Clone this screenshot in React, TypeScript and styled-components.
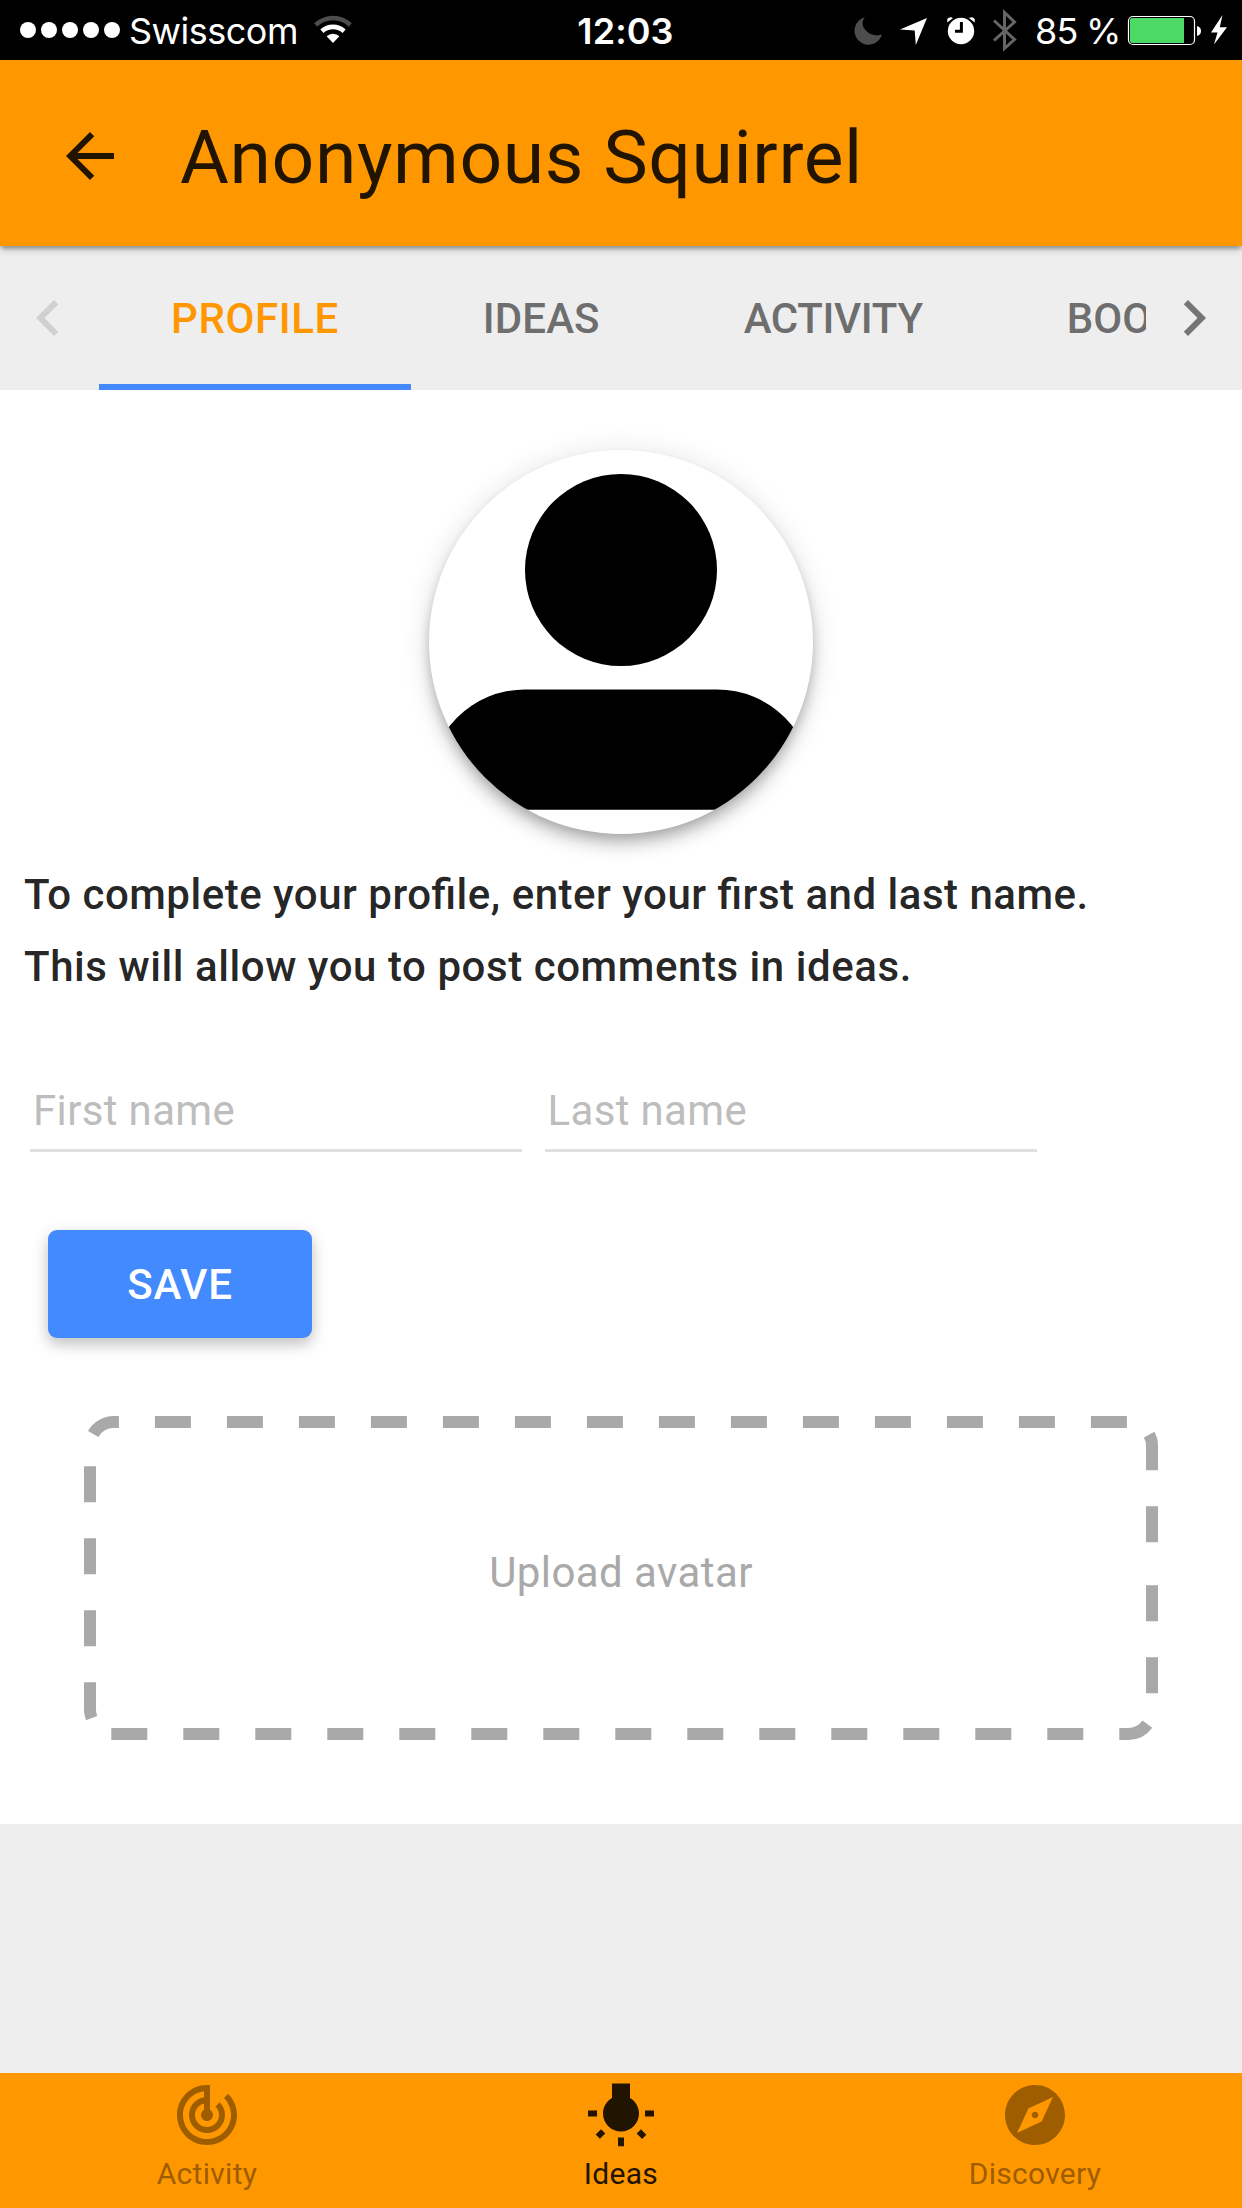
import React, { useState } from "react";
import styled, { createGlobalStyle } from "styled-components";

const GlobalStyle = createGlobalStyle`
  * { box-sizing: border-box; }
  body { margin: 0; background: #eee; }
`;

const Screen = styled.div`
  width: 1242px;
  height: 2208px;
  display: flex;
  flex-direction: column;
  overflow: hidden;
  background: #eee;
  color: rgba(0, 0, 0, 0.87);
  font-family: Roboto, "Liberation Sans", sans-serif;
`;

/* ---------- status bar ---------- */

const StatusBar = styled.div`
  flex: none;
  height: 60px;
  display: grid;
  grid-template-columns: 1fr auto 1fr;
  background: #000;
  color: #fff;
  font-family: Inter, "Liberation Sans", sans-serif;
  font-size: 36px;
  line-height: 62px;
  white-space: nowrap;
`;

const StatusLeft = styled.div`
  display: flex;
  padding-left: 20px;
`;

const StatusRight = styled.div`
  display: flex;
  justify-content: flex-end;
  padding-right: 15px;
`;

const SignalDots = styled.div`
  display: flex;
  align-items: center;
  gap: 5px;
  height: 60px;
  margin-right: 9px;
`;

const Dot = styled.i`
  width: 16px;
  height: 16px;
  border-radius: 50%;
  background: #fff;
`;

const Carrier = styled.span`
  width: 168px;
  margin-right: 17px;
  letter-spacing: -0.5px;
`;

const Clock = styled.span`
  padding-left: 9px;
  font-weight: 600;
  letter-spacing: 0.1px;
`;

const Percent = styled.span`
  width: 82px;
  margin: 0 10px 0 18px;
  letter-spacing: -0.8px;
  word-spacing: -1px;
`;

const Glyph = styled.svg`
  display: block;
  flex: none;
`;

/* ---------- header ---------- */

const Header = styled.header`
  flex: none;
  position: relative;
  z-index: 1;
  height: 186px;
  display: flex;
  align-items: center;
  padding: 6px 54px 0;
  background: #ff9800;
  box-shadow: 0 3px 9px 0 rgba(0, 0, 0, 0.2), 0 3px 3px 0 rgba(0, 0, 0, 0.14),
    0 6px 3px -3px rgba(0, 0, 0, 0.12);
`;

const Title = styled.h1`
  margin: 2px 0 0 54px;
  font-size: 75px;
  font-weight: 400;
  line-height: 90px;
  letter-spacing: 0.6px;
`;

/* ---------- tabs ---------- */

const TabBar = styled.nav`
  flex: none;
  height: 144px;
  display: flex;
`;

const PagerButton = styled.button<{ $dim?: boolean }>`
  flex: none;
  width: 96px;
  padding: 0 12px;
  border: 0;
  background: none;
  color: ${(p) => (p.$dim ? "#d0d0d0" : "#757575")};
`;

const TabCanvas = styled.div`
  flex: 1;
  display: flex;
  overflow: hidden;
  padding-left: 3px;
`;

const Tab = styled.button<{ $active?: boolean; $tracking?: number }>`
  flex: none;
  padding: 2px 72px 0;
  border: 0;
  border-top: 6px solid transparent;
  border-bottom: 6px solid ${(p) => (p.$active ? "#448aff" : "transparent")};
  background: none;
  color: ${(p) => (p.$active ? "#ff9800" : "#6e6e6e")};
  font: 500 42px/130px Roboto, "Liberation Sans", sans-serif;
  letter-spacing: ${(p) => p.$tracking ?? 0}px;
  text-transform: uppercase;
`;

/* ---------- profile ---------- */

const Profile = styled.main`
  flex: none;
  height: 1434px;
  display: flex;
  flex-direction: column;
  background: #fff;
`;

const Avatar = styled.div`
  align-self: center;
  width: 384px;
  height: 384px;
  margin-top: 60px;
  border-radius: 50%;
  overflow: hidden;
  background: #fff;
  box-shadow: 0 6px 12px -3px rgba(0, 0, 0, 0.2), 0 12px 15px 0 rgba(0, 0, 0, 0.14),
    0 3px 30px 0 rgba(0, 0, 0, 0.12);
`;

const Hint = styled.p`
  margin: 25px 24px 0;
  font-size: 42px;
  font-weight: 500;
  line-height: 72px;
  letter-spacing: 0.56px;
  font-feature-settings: "liga" 1;
  &::first-line {
    letter-spacing: 0.5px;
  }
`;

const NameRow = styled.div`
  display: flex;
  gap: 22.5px;
  margin: 71px 0 0 30px;
`;

const Field = styled.input`
  width: 492px;
  height: 78px;
  padding: 0 0 2px 3px;
  border: 0;
  border-bottom: 3px solid #e0e0e0;
  outline: 0;
  background: none;
  color: rgba(0, 0, 0, 0.87);
  font: 400 42px/73px Roboto, "Liberation Sans", sans-serif;
  letter-spacing: 0.35px;
  &::placeholder {
    color: #bdbdbd;
    opacity: 1;
  }
`;

const SaveButton = styled.button`
  width: 264px;
  height: 108px;
  margin: 78px 0 0 48px;
  padding: 2px 0 0;
  border: 0;
  border-radius: 9px;
  background: #448aff;
  color: #fff;
  font: 500 42px/106px Roboto, "Liberation Sans", sans-serif;
  letter-spacing: 0.8px;
  box-shadow: 0 6px 15px 0 rgba(0, 0, 0, 0.26);
`;

const DropZone = styled.div`
  width: 1074px;
  height: 324px;
  margin: 78px 0 0 84px;
  display: grid;
  place-items: center;
  color: #a9a9a9;
  font-size: 42px;
  line-height: 60px;
  letter-spacing: 0.42px;
  & > * {
    grid-area: 1 / 1;
  }
`;

const DropLabel = styled.span`
  padding-bottom: 10px;
`;

/* ---------- bottom navigation ---------- */

const BottomNav = styled.nav`
  flex: none;
  height: 135px;
  margin-top: auto;
  display: grid;
  grid-template-columns: repeat(3, 1fr);
  background: #ff9800;
`;

const NavItem = styled.a<{ $active?: boolean }>`
  display: flex;
  flex-direction: column;
  align-items: center;
  padding-top: 6px;
  color: ${(p) => (p.$active ? "#211400" : "#9e5e00")};
  font-size: 30px;
  line-height: 36px;
  letter-spacing: 0.3px;
`;

const NavLabel = styled.span`
  margin-top: 5px;
`;

const Icon = ({ d }: { d: string }) => (
  <Glyph width="72" height="72" viewBox="0 0 24 24" fill="currentColor">
    <path d={d} />
  </Glyph>
);

const icons = {
  back: "M20 11H7.83l5.59-5.59L12 4l-8 8 8 8 1.41-1.41L7.83 13H20v-2z",
  left: "M15.41 7.41L14 6l-6 6 6 6 1.41-1.41L10.83 12z",
  right: "M10 6L8.59 7.41 13.17 12l-4.58 4.59L10 18l6-6z",
};

const navItems = [
  {
    label: "Activity",
    d: "M19.07 4.93l-1.41 1.41C19.1 7.79 20 9.79 20 12c0 4.42-3.58 8-8 8s-8-3.58-8-8c0-4.08 3.05-7.44 7-7.93v2.02C8.16 6.57 6 9.03 6 12c0 3.31 2.69 6 6 6s6-2.69 6-6c0-1.66-.67-3.16-1.76-4.24l-1.41 1.41C15.55 9.9 16 10.9 16 12c0 2.21-1.79 4-4 4s-4-1.79-4-4c0-1.86 1.28-3.41 3-3.86v2.14c-.6.35-1 .98-1 1.72 0 1.1.9 2 2 2s2-.9 2-2c0-.74-.4-1.38-1-1.72V2h-1C6.48 2 2 6.48 2 12s4.48 10 10 10 10-4.48 10-10c0-2.76-1.12-5.26-2.93-7.07z",
  },
  {
    label: "Ideas",
    d: "M3.55 18.54l1.41 1.41 1.8-1.79-1.41-1.41-1.8 1.79zM11 22.45h2V19.5h-2v2.95zM4 10.5H1v2h3v-2zm11-4.19V1.5H9v4.81C7.21 7.35 6 9.28 6 11.5c0 3.31 2.69 6 6 6s6-2.69 6-6c0-2.22-1.21-4.15-3-5.19zm5 4.19v2h3v-2h-3zm-2.76 7.66l1.79 1.8 1.41-1.41-1.8-1.79-1.4 1.4z",
  },
  {
    label: "Discovery",
    d: "M12 10.9c-.61 0-1.1.49-1.1 1.1s.49 1.1 1.1 1.1c.61 0 1.1-.49 1.1-1.1s-.49-1.1-1.1-1.1zM12 2C6.48 2 2 6.48 2 12s4.48 10 10 10 10-4.48 10-10S17.52 2 12 2zm2.19 12.19L6 18l3.81-8.19L18 6l-3.81 8.19z",
  },
];

const WifiIcon = () => (
  <Glyph width="38" height="60" viewBox="0 0 38 60" fill="none" stroke="#fff" strokeWidth="4.6">
    <path d="M1.7 25A25 25 0 0 1 36.3 25" stroke="#4d4d4d" />
    <path d="M7.9 31.2A16.5 16.5 0 0 1 30.1 31.2" />
    <path d="M12.6 36.3A9.4 9.4 0 0 1 25.4 36.3L19 43z" fill="#fff" stroke="none" />
  </Glyph>
);

/* Moon, location, alarm and bluetooth indicators. */
const IndicatorIcons = () => (
  <Glyph width="163" height="60" viewBox="854 0 163 60">
    <path
      d="M865 17.2A14 14 0 1 0 882 34.6A15.6 15.6 0 0 1 863.6 27.5C861.8 23.6 862.4 20 865 17.2z"
      fill="#4d4d4d"
    />
    <path d="M927 18L915.8 45L914.7 30.5L900 29.5z" fill="#fff" />
    <circle cx="961" cy="31" r="13.2" fill="#fff" />
    <path d="M947.3 22.5V19Q949.5 16.2 953 18zM974.7 22.5V19Q972.5 16.2 969 18z" fill="#fff" />
    <path d="M961.4 22V31.3H955" fill="none" stroke="#000" strokeWidth="3" />
    <path
      d="M994 20.5L1014.5 39.5L1004.5 48.5V12.5L1014.5 22L994 40.5"
      fill="none"
      stroke="#666"
      strokeWidth="3"
    />
  </Glyph>
);

const BatteryIcon = () => (
  <Glyph width="100" height="60" viewBox="1127 0 100 60">
    <rect x="1128.5" y="16.5" width="66" height="28" rx="4.5" fill="none" stroke="#fff" strokeWidth="1.2" />
    <path d="M1132 18H1184V43H1132Q1130 43 1130 41V20Q1130 18 1132 18z" fill="#4cd964" />
    <path d="M1197 26Q1201 27 1201 31T1197 36z" fill="#fff" />
    <path d="M1222.5 15L1211 32.5H1217.5L1214 44.5L1227 27.3H1219.8z" fill="#fff" />
  </Glyph>
);

const Person = () => (
  <Glyph width="384" height="384" viewBox="0 0 384 384">
    <circle cx="192" cy="120" r="96" />
    <path d="M0 336A96 96 0 0 1 96 239.5H288A96 96 0 0 1 384 336V359.7H0z" />
  </Glyph>
);

const DashedFrame = () => (
  <Glyph
    width="1074"
    height="324"
    viewBox="84 1416 1074 324"
    fill="none"
    stroke="#a9a9a9"
    strokeWidth="12"
    strokeDasharray="36 36"
  >
    <path d="M93.2 1434A24 24 0 0 1 114 1422H1128" strokeDashoffset="6" />
    <path d="M1128 1422A24 24 0 0 1 1152 1446V1566" strokeDashoffset="-25.7" />
    <path d="M1152 1585.2V1694" />
    <path d="M111.3 1734H1128A24 24 0 0 0 1147.4 1724.1" />
    <path d="M90 1466.2V1710A24 24 0 0 0 92 1719" />
  </Glyph>
);

export default function App() {
  const [first, setFirst] = useState("");
  const [last, setLast] = useState("");

  return (
    <Screen>
      <GlobalStyle />
      <StatusBar>
        <StatusLeft>
          <SignalDots>
            {[0, 1, 2, 3, 4].map((n) => (
              <Dot key={n} />
            ))}
          </SignalDots>
          <Carrier>Swisscom</Carrier>
          <WifiIcon />
        </StatusLeft>
        <Clock>12:03</Clock>
        <StatusRight>
          <IndicatorIcons />
          <Percent>85 %</Percent>
          <BatteryIcon />
        </StatusRight>
      </StatusBar>

      <Header>
        <Icon d={icons.back} />
        <Title>Anonymous Squirrel</Title>
      </Header>

      <TabBar>
        <PagerButton $dim>
          <Icon d={icons.left} />
        </PagerButton>
        <TabCanvas>
          <Tab $active $tracking={0.6}>
            Profile
          </Tab>
          <Tab $tracking={0.1}>Ideas</Tab>
          <Tab $tracking={-0.35}>Activity</Tab>
          <Tab>Bookmarks</Tab>
        </TabCanvas>
        <PagerButton>
          <Icon d={icons.right} />
        </PagerButton>
      </TabBar>

      <Profile>
        <Avatar>
          <Person />
        </Avatar>
        <Hint>
          To complete your profile, enter your first and last name.
          <br />
          This will allow you to post comments in ideas.
        </Hint>
        <NameRow>
          <Field placeholder="First name" value={first} onChange={(e) => setFirst(e.target.value)} />
          <Field placeholder="Last name" value={last} onChange={(e) => setLast(e.target.value)} />
        </NameRow>
        <SaveButton>SAVE</SaveButton>
        <DropZone>
          <DashedFrame />
          <DropLabel>Upload avatar</DropLabel>
        </DropZone>
      </Profile>

      <BottomNav>
        {navItems.map((item) => (
          <NavItem key={item.label} $active={item.label === "Ideas"}>
            <Icon d={item.d} />
            <NavLabel>{item.label}</NavLabel>
          </NavItem>
        ))}
      </BottomNav>
    </Screen>
  );
}
